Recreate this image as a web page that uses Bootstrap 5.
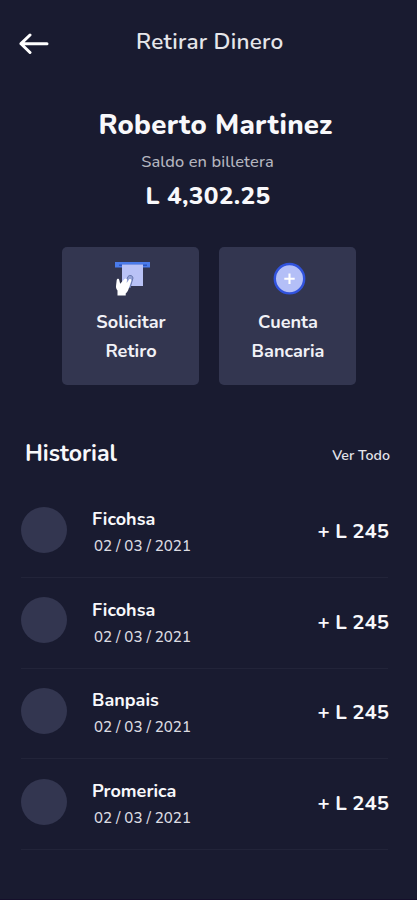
<!DOCTYPE html>
<html lang="es">
<head>
<meta charset="utf-8">
<meta name="viewport" content="width=device-width, initial-scale=1">
<title>Retirar Dinero</title>
<link href="https://cdn.jsdelivr.net/npm/bootstrap@5.3.0/dist/css/bootstrap.min.css" rel="stylesheet">
<style>
body { background: #191b30; color: #f8f8fb; font-family: "Nunito", "Open Sans", sans-serif; }
.screen { height: 900px; border-bottom: 1px solid #150f2b; }
.topbar { height: 81px; padding: 0 19px; }
.topbar svg { margin-top: 7px; }
.topbar h1 { font-size: 22.5px; font-weight: 600; letter-spacing: .25px; color: #e6e6ea; margin-left: 87px; line-height: 30px; padding-top: 3px; }
.holder { padding: 24px 0 0 14px; }
.holder-name { font-size: 27.6px; font-weight: 800; line-height: 40px; letter-spacing: .3px; }
.holder-label { font-size: 16.4px; font-weight: 500; line-height: 26px; letter-spacing: .12px; color: #b4b5bf; margin: 4px 16px 1px 0; }
.holder-amount { font-size: 24.5px; font-weight: 800; line-height: 40px; letter-spacing: .3px; margin-right: 15px; }
.actions { gap: 20px; padding: 31px 0 0 1px; }
.action { width: 137px; height: 138px; background: #333650; border-radius: 5px; padding-top: 13px; color: #f1f1f6; font-size: 18.1px; font-weight: 700; line-height: 29px; }
.action svg { display: block; margin: 0 auto 12px; }
.action span { display: block; padding-left: 1px; }
.history-head { padding: 49px 27px 0 25px; }
.history-head h2 { font-size: 23.1px; font-weight: 700; line-height: 40px; }
.history-head a { font-size: 14.2px; font-weight: 600; line-height: 20px; color: #e4e4ea; padding-top: 12px; }
.history { margin: 13.5px 29px 0 21px; }
.entry { height: 90.6px; border-bottom: 1px solid #222439; padding-bottom: 5px; }
.avatar { width: 46px; height: 46px; background: #333650; }
.entry-text { margin-left: 25px; padding-top: 7px; }
.entry-name { font-size: 18px; font-weight: 700; line-height: 27px; }
.entry-date { font-size: 15.1px; font-weight: 500; line-height: 27px; margin-left: 2px; color: #dcdce2; }
.entry-amount { font-size: 20.4px; font-weight: 700; line-height: 30px; margin-right: -1px; padding-top: 2.5px; }
</style>
</head>
<body>
<main class="screen d-flex flex-column overflow-hidden">
  <header class="topbar d-flex align-items-center">
    <svg width="30" height="22" viewBox="0 0 30 22" fill="none" stroke="#fff" stroke-width="3" stroke-linecap="round" stroke-linejoin="round"><path d="M28 10.7H2M11 2L2 10.7L11 19.5"/></svg>
    <h1 class="mb-0">Retirar Dinero</h1>
  </header>

  <section class="holder text-center">
    <div class="holder-name">Roberto Martinez</div>
    <div class="holder-label">Saldo en billetera</div>
    <div class="holder-amount">L 4,302.25</div>
  </section>

  <section class="actions d-flex justify-content-center">
    <a href="#" class="action text-center text-decoration-none">
      <svg width="40" height="36" viewBox="0 0 40 36">
        <path fill="#4a7bea" d="M4 2h35v5.500H4z"/>
        <path fill="#2d55bd" d="M8 4.500h28v1.500H8z"/>
        <path fill="#b9c2f6" d="M11 4.500h21v21.500H11z"/>
        <path d="M14 24l3-7.500a2.800 2.800 0 0 1 5 1.500L19 28z" fill="#93a1d6" stroke="#6676ad" stroke-width="1"/>
        <path fill="#fff" d="M6.500 35.500v-5c-1.400-1.600-1.700-3.200-1.400-5.200l.6-5.300c.5-1.800 2.300-1.600 2.600.2l.9 3.600 4.300-4.700c1.300-1.300 2.800-.4 2.500 1.200l-.3 2.600 2.400-3.400c1.100-1 2.600-.2 2.200 1.400l-2.700 8c-.7 2.300-1.900 3.800-2.900 4.600v2z"/>
      </svg>
      <span>Solicitar<br>Retiro</span>
    </a>
    <a href="#" class="action text-center text-decoration-none">
      <svg width="40" height="36" viewBox="0 0 40 36">
        <circle cx="21.500" cy="18.700" r="14.700" fill="#b4bff7" stroke="#3153dd" stroke-width="2.400"/>
        <path d="M21.500 13.500v10.400M16.300 18.700h10.400" stroke="#fff" stroke-width="2.100"/>
      </svg>
      <span>Cuenta<br>Bancaria</span>
    </a>
  </section>

  <section>
    <div class="history-head d-flex justify-content-between">
      <h2 class="mb-0">Historial</h2>
      <a href="#" class="text-decoration-none">Ver Todo</a>
    </div>
    <ul class="history list-unstyled">
      <li class="entry d-flex align-items-center">
        <span class="avatar rounded-circle flex-shrink-0"></span>
        <div class="entry-text"><div class="entry-name">Ficohsa</div><div class="entry-date">02 / 03 / 2021</div></div>
        <span class="entry-amount ms-auto">+ L 245</span>
      </li>
      <li class="entry d-flex align-items-center">
        <span class="avatar rounded-circle flex-shrink-0"></span>
        <div class="entry-text"><div class="entry-name">Ficohsa</div><div class="entry-date">02 / 03 / 2021</div></div>
        <span class="entry-amount ms-auto">+ L 245</span>
      </li>
      <li class="entry d-flex align-items-center">
        <span class="avatar rounded-circle flex-shrink-0"></span>
        <div class="entry-text"><div class="entry-name">Banpais</div><div class="entry-date">02 / 03 / 2021</div></div>
        <span class="entry-amount ms-auto">+ L 245</span>
      </li>
      <li class="entry d-flex align-items-center">
        <span class="avatar rounded-circle flex-shrink-0"></span>
        <div class="entry-text"><div class="entry-name">Promerica</div><div class="entry-date">02 / 03 / 2021</div></div>
        <span class="entry-amount ms-auto">+ L 245</span>
      </li>
    </ul>
  </section>
</main>
<script src="https://cdn.jsdelivr.net/npm/bootstrap@5.3.0/dist/js/bootstrap.bundle.min.js"></script>
</body>
</html>
